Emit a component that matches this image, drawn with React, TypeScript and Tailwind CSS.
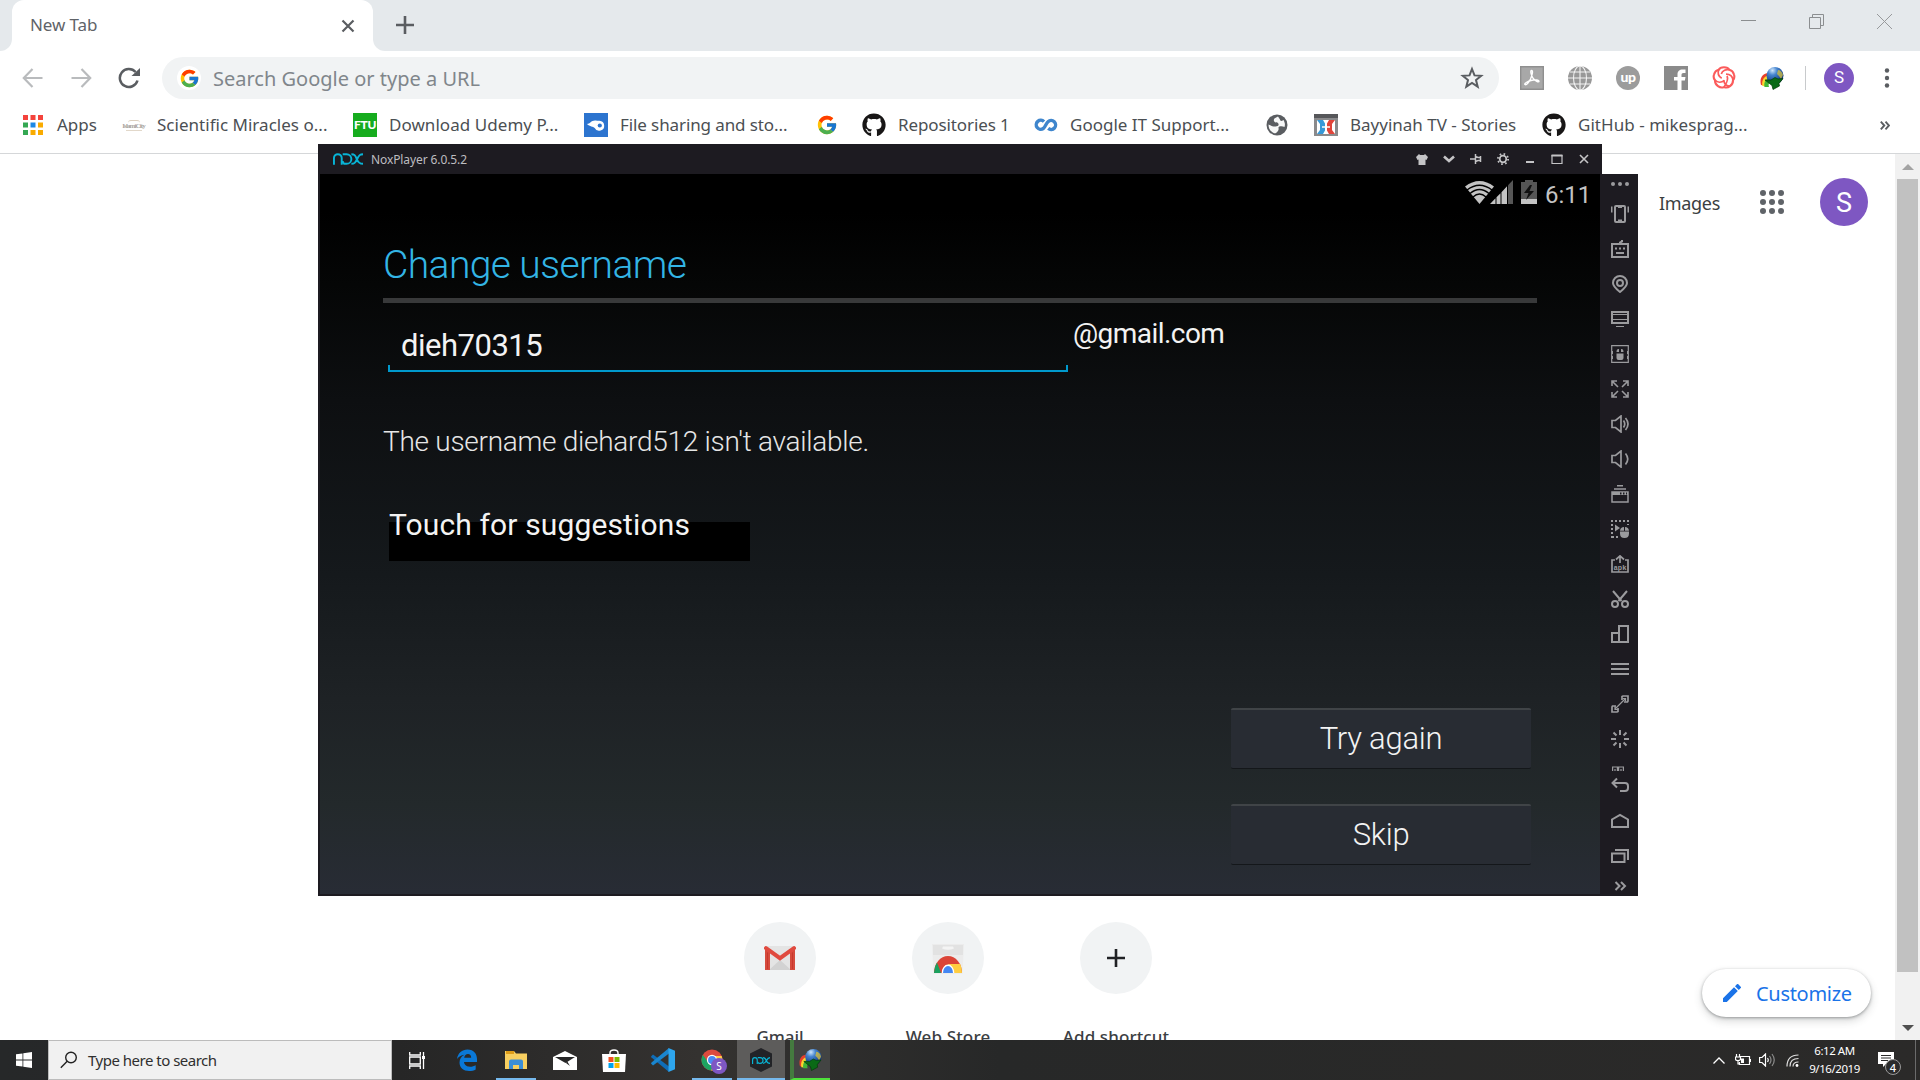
import React from "react";
import type { ReactNode } from "react";
import { FcGoogle } from "react-icons/fc";
import { FaGithub } from "react-icons/fa";

const UI = "font-['Noto_Sans',sans-serif]";

/* ---------- shared drawings ---------- */

function Idm({ className }: { className: string }) {
  return (
    <svg viewBox="0 0 24 24" className={className}>
      <defs>
        <radialGradient id="idmBlue" cx=".35" cy=".2" r=".8">
          <stop offset="0" stopColor="#cfe6fb" />
          <stop offset=".35" stopColor="#4484cf" />
          <stop offset="1" stopColor="#0b2f73" />
        </radialGradient>
      </defs>
      <path d="M1 19C-1 12 3 6 10 7l2 5c-4-1-6 3-5 8z" fill="#e8402a" />
      <path d="M2.500 20C1 14 5 9 10 9.500l2 4c-4-1-5 3-4 7z" fill="#f8d72d" />
      <path d="M4.500 21C3.500 16 6 12 11 12l1 4c-3 0-4 2-3 5z" fill="#43b638" />
      <circle cx="15" cy="9.500" r="8.500" fill="url(#idmBlue)" />
      <path d="M18 4c2 0 4.500 2 5 5l-2 4-2-3-2-2z" fill="#d8c03c" opacity=".75" />
      <path d="M5 14l6 0 4-2.500 3 1.500 5-.5-4 5 .5 2.500-6.500 3.500-1-4z" fill="#0a6a16" stroke="#033a09" strokeWidth=".7" />
    </svg>
  );
}

function Chrome({ className }: { className: string }) {
  return (
    <svg viewBox="0 0 24 24" className={className}>
      <circle cx="12" cy="12" r="11.500" fill="#dd4b3e" />
      <path d="M2 6.300A11.500 11.500 0 0 0 11 23.400L16.500 14 7.500 14z" fill="#1da462" />
      <path d="M11 23.400A11.500 11.500 0 0 0 22.500 7.500L12 7.500 16.500 14z" fill="#ffcd46" />
      <circle cx="12" cy="12" r="5.600" fill="#fff" />
      <circle cx="12" cy="12" r="4.300" fill="#4a8af4" />
    </svg>
  );
}

function NoxLogo({ className }: { className: string }) {
  return (
    <svg viewBox="0 0 31 12" className={className} fill="none" stroke="#08b4d6" strokeWidth="2">
      <path d="M1 12V5a4 4 0 0 1 8 0v7" />
      <path d="M10 1h4a5 5 0 0 1 0 10h-1a3 3 0 0 1-3-3" />
      <path d="M19 1c3 0 4 1 5.500 5S28 11 31 11M31 1c-3 0-4 1-6 5s-3 5-6 5" />
    </svg>
  );
}

/* ---------- browser ---------- */

function TabStrip() {
  return (
    <div className="flex h-[51px] bg-[#e5e9ec]">
      <div className="w-3 bg-white">
        <div className="h-full rounded-br-[12px] bg-[#e5e9ec]" />
      </div>
      <div className="bg-[#e5e9ec]">
        <div className="flex h-full w-[361px] items-center justify-between rounded-t-[12px] bg-white pr-[17px] pl-[18px]">
          <span className="-mt-0.5 text-[17px] leading-6 tracking-[-0.1px] text-[#5f6368]">New Tab</span>
          <svg viewBox="0 0 16 16" className="h-4 w-4" stroke="#5a5d61" strokeWidth="2.200">
            <path d="M2.500 2.500l11 11M13.500 2.500l-11 11" />
          </svg>
        </div>
      </div>
      <div className="flex flex-1 bg-white">
        <div className="flex flex-1 rounded-bl-[12px] bg-[#e5e9ec] pl-[23px]">
          <svg viewBox="0 0 18 18" className="mt-4 h-[18px] w-[18px]" stroke="#5a5d61" strokeWidth="2.600">
            <path d="M9 0v18M0 9h18" />
          </svg>
          <div className="mr-[28px] ml-auto flex gap-[53px] pt-[14px]">
            <svg viewBox="0 0 15 15" className="h-[15px] w-[15px]" stroke="#8b8e90">
              <path d="M0 6.500h15" />
            </svg>
            <svg viewBox="0 0 15 15" className="h-[15px] w-[15px]" stroke="#8b8e90" fill="none">
              <path d="M.5 3.500h11v11H.5zM3.500 3.500v-3h11v11h-3" />
            </svg>
            <svg viewBox="0 0 15 15" className="h-[15px] w-[15px]" stroke="#97999b">
              <path d="M0 0l15 15M15 0L0 15" />
            </svg>
          </div>
        </div>
      </div>
    </div>
  );
}

function Toolbar() {
  return (
    <div className="flex h-[54px] items-center bg-white pl-[22px]">
      <svg viewBox="0 0 22 22" className="h-[22px] w-[22px]" stroke="#b9bbbd" strokeWidth="2.200" fill="none">
        <path d="M20.500 11H2M10.500 2L1.800 11l8.700 9" />
      </svg>
      <svg viewBox="0 0 22 22" className="ml-[26px] h-[22px] w-[22px]" stroke="#b9bbbd" strokeWidth="2.200" fill="none">
        <path d="M1.500 11H20M11.500 2l8.700 9-8.700 9" />
      </svg>
      <svg viewBox="0 0 22 22" className="ml-[26px] h-[22px] w-[22px]" stroke="#5a5d61" strokeWidth="2.500" fill="none">
        <path d="M19.500 13.500A9 9 0 1 1 17.600 5" />
        <path d="M13.500 9H22V1z" fill="#5a5d61" stroke="none" />
      </svg>
      <div className="ml-[22px] flex h-[42px] w-[1337px] items-center rounded-full bg-[#f1f3f4] pr-[15px] pl-[15px]">
        <span className="flex h-6 w-6 items-center justify-center rounded-full bg-white">
          <FcGoogle className="h-[21px] w-[21px]" />
        </span>
        <span className="ml-3 pt-px text-[20px] leading-7 text-[#80868b]">Search Google or type a URL</span>
        <svg viewBox="0 0 24 24" className="ml-auto h-[24px] w-[24px]" fill="none" stroke="#5a5d61" strokeWidth="2">
          <path d="M12 3l2.500 6.400 6.700.4-5.200 4.300 1.700 6.600L12 17l-5.700 3.700L8 14.100 2.800 9.800l6.700-.4z" />
        </svg>
      </div>
      <div className="ml-[21px] flex gap-6">
        <svg viewBox="0 0 24 24" className="h-6 w-6">
          <path d="M0 0h24v24H0z" fill="#a8a8a8" />
          <path d="M.7.7h22.600v22.600H.7z" fill="none" stroke="#8f8f8f" strokeWidth="1.400" />
          <path d="M11.500 4.500c2 0 .5 5-1 8.500-1.500 3-4 6.500-5.500 5.500-1-1 3-3.500 7-4.300 4-.8 7-.2 7 1 0 1.800-4-.2-6-3-1.700-2.400-3-7.700-1.500-7.700z" fill="none" stroke="#fff" strokeWidth="1.400" />
        </svg>
        <svg viewBox="0 0 24 24" className="h-6 w-6">
          <circle cx="12" cy="12" r="12" fill="#989898" />
          <g fill="none" stroke="#f2f2f2" strokeWidth="1.100">
            <path d="M12 0v24M0 12h24M2 6h20M2 18h20" />
            <ellipse cx="12" cy="12" rx="6.500" ry="12" />
          </g>
        </svg>
        <span className="flex h-6 w-6 items-center justify-center rounded-full bg-[#9c9c9c] pb-0.5 font-['Lato',sans-serif] text-[14px] leading-none font-black tracking-[-0.5px] text-white">
          up
        </span>
        <svg viewBox="0 0 24 24" className="h-6 w-6">
          <path d="M0 0h24v24H0z" fill="#8a8a8a" />
          <path d="M13.500 24v-9.500H10V11h3.500V8.500C13.500 5 15.500 3.500 18.500 3.500h3V7H19.500C18 7 17.500 7.700 17.500 9v2h4l-.6 3.500h-3.400V24z" fill="#fff" />
        </svg>
        <svg viewBox="0 0 24 24" className="h-6 w-6" fill="none" stroke="#fb5b5b" strokeWidth="2.100">
          <path d="M12 1.200c3 0 4.500 1 5.300 2.600 2.600.6 4 2.300 4.700 4.700.8 2.500.2 4.300-1 5.700.1 2.700-1 4.600-3 6-2.100 1.600-4 1.700-6 .9-2 .8-3.900.7-6-.9-2-1.400-3.100-3.300-3-6C1.800 12.800 1.200 11 2 8.500c.7-2.400 2.100-4.100 4.700-4.700C7.500 2.200 9 1.200 12 1.200z" />
          <path d="M6.700 3.800c-1.500 4 .5 7 3 8.500M17.300 3.800c-3-.8-7 .4-8 4.200M21 14.200c-.4-3.500-3-6-7-6M18 20.200c-3 0-6.500-2.500-6-6M3 14.200c2.500 2.500 6.500 2.600 9.500.2M15 10c2 4-1 8-3 11" strokeWidth="1.700" />
        </svg>
        <Idm className="h-6 w-6" />
      </div>
      <div className="ml-[21px] h-6 w-px bg-[#c8cacc]" />
      <div className="ml-[18px] flex h-[30px] w-[30px] items-center justify-center rounded-full bg-[#7e57c2] font-['Roboto',sans-serif] text-[17px] text-white">S</div>
      <svg viewBox="0 0 6 20" className="ml-[30px] h-5 w-[6px]" fill="#5a5d61">
        <circle cx="3" cy="2.500" r="2.200" />
        <circle cx="3" cy="10" r="2.200" />
        <circle cx="3" cy="17.500" r="2.200" />
      </svg>
    </div>
  );
}

function Bookmark({ icon, label, className }: { icon: ReactNode; label?: string; className: string }) {
  return (
    <div className={`flex shrink-0 items-center whitespace-nowrap ${className}`}>
      {icon}
      {label && <span className="ml-3 leading-6">{label}</span>}
    </div>
  );
}

const appColors = [
  ["#f4433c", "#f4433c", "#f4433c"],
  ["#34a853", "#1e88e5", "#f9ab00"],
  ["#34a853", "#f9ab00", "#f9ab00"],
];

function BookmarksBar() {
  return (
    <div className="flex h-[49px] items-center border-b border-[#d5d7d9] bg-white pb-2 pl-[23px] text-[17px] text-[#4b4f53]">
      <Bookmark
        className="w-[99px] [&>span]:ml-[14px]"
        label="Apps"
        icon={
          <svg viewBox="0 0 20 20" className="h-5 w-5">
            {appColors.map((row, y) => row.map((c, x) => <rect key={`${x}${y}`} x={x * 7.5} y={y * 7.5} width="5" height="5" fill={c} />))}
          </svg>
        }
      />
      <Bookmark
        className="w-[231px] tracking-[0.02px]"
        label="Scientific Miracles o..."
        icon={
          <span className="flex h-6 w-[23px] flex-col items-center justify-center font-['Liberation_Serif',serif] text-[7px] leading-none font-bold tracking-[-0.9px] text-[#a9a4a0]">
            <span className="h-[3px] w-3 rounded-t-full border-t border-[#dccfbe]" />
            IslamiCity
            <span className="h-px w-4 bg-[#e2d8ca]" />
          </span>
        }
      />
      <Bookmark
        className="w-[231px] tracking-[0.05px]"
        label="Download Udemy P..."
        icon={
          <span className="flex h-6 w-6 items-center justify-center bg-[#16ac1e] font-['Lato',sans-serif] text-[12px] font-black tracking-[-0.3px] text-white">FTU</span>
        }
      />
      <Bookmark
        className="w-[232px] tracking-[-0.1px]"
        label="File sharing and sto..."
        icon={
          <svg viewBox="0 0 24 24" className="h-6 w-6">
            <path d="M0 0h24v24H0z" fill="#2c74cf" />
            <path d="M3 11c3 0 4-3.500 8-3.500 2 0 2.500.5 4.500.3a5 5 0 1 1-4.800 7.200C9 13 6 14 3 11z" fill="#fff" />
            <circle cx="15.800" cy="12.500" r="2.100" fill="#2c74cf" />
          </svg>
        }
      />
      <Bookmark className="w-[46px]" icon={<FcGoogle className="h-[22px] w-[22px]" />} />
      <Bookmark className="w-[172px] tracking-[-0.1px]" label="Repositories 1" icon={<FaGithub className="h-6 w-6 text-[#181616]" />} />
      <Bookmark
        className="w-[232px]"
        label="Google IT Support..."
        icon={
          <svg viewBox="0 0 24 24" className="h-6 w-6" fill="none" stroke="#3f86cd" strokeWidth="3.400">
            <path d="M10 8.700A4.500 4.500 0 1 0 9.300 15.500C11.500 13.500 12 10.500 14 8.700a4.500 4.500 0 1 1 .2 6.700" />
          </svg>
        }
      />
      <Bookmark
        className="w-[48px]"
        icon={
          <svg viewBox="0 0 22 22" className="h-[22px] w-[22px]">
            <circle cx="11" cy="11" r="10.500" fill="#5a5d61" />
            <path d="M12 2.500c-2 1-5 2-4 4.500s4 .5 4.500 3-1 2-3 2.500-5-1-7-2c0 3 1 5.500 3.500 7.500 2 1.500 3 1.500 4 1 2-2 3-3 2.500-5s4-2 6-1c1-3 0-5-1-7-2 1-3 1.500-3.500-.5z" fill="#fff" opacity=".95" />
          </svg>
        }
      />
      <Bookmark
        className="w-[228px]"
        label="Bayyinah TV - Stories"
        icon={
          <svg viewBox="0 0 24 24" className="h-6 w-6">
            <path d="M0 1h24v22H0z" fill="#8a8a8c" />
            <path d="M0 1h24v4H0z" fill="#56575a" />
            <path d="M3 7h18v14H3z" fill="#fff" />
            <path d="M3 7h6l2 3.500v7L9 21H3l3-4v-6z" fill="#3799d8" />
            <path d="M21 7h-6l-2 3.500v7l2 3.500h6l-3-4v-6z" fill="#e0443a" />
            <path d="M8 14h8" stroke="#fff" strokeWidth="1.500" />
          </svg>
        }
      />
      <Bookmark className="w-[338px] tracking-[0.04px]" label="GitHub - mikesprag..." icon={<FaGithub className="h-6 w-6 text-[#181616]" />} />
      <svg viewBox="0 0 10 9" className="h-[9px] w-[10px]" fill="none" stroke="#5a5d61" strokeWidth="1.900">
        <path d="M.8.7l3.500 3.800L.8 8.300M5.500.7L9 4.500 5.500 8.300" />
      </svg>
    </div>
  );
}

function Shortcut({ label, className, children }: { label: string; className: string; children: ReactNode }) {
  return (
    <div className="flex w-[168px] flex-col items-center">
      <div className="flex h-[72px] w-[72px] shrink-0 items-center justify-center rounded-full bg-[#f1f3f4]">{children}</div>
      <span className={`mt-[31px] shrink-0 text-[17px] leading-6 font-medium whitespace-nowrap text-[#3c4043] ${className}`}>{label}</span>
    </div>
  );
}

function NewTabPage() {
  return (
    <div className="flex h-[886px] bg-white">
      <div className="flex w-[1895px] flex-col overflow-hidden">
        <div className="mt-[24px] mr-[27px] flex h-[48px] items-center justify-end">
          <span className="pt-px text-[18px] leading-6 tracking-[-0.3px] text-[#3b3e41]">Images</span>
          <svg viewBox="0 0 24 24" className="ml-[40px] h-6 w-6" fill="#5f6368">
            {[3, 12, 21].map((y) => [3, 12, 21].map((x) => <circle key={`${x}-${y}`} cx={x} cy={y} r="3" />))}
          </svg>
          <div className="ml-[36px] flex h-12 w-12 items-center justify-center rounded-full bg-[#7e57c2] pt-[3px] font-['Roboto',sans-serif] text-[27px] leading-none text-white">S</div>
        </div>
        <div className="mt-[696px] ml-[696px] flex h-[118px] shrink-0">
          <Shortcut label="Gmail" className="tracking-[-0.1px]">
            <svg viewBox="0 0 32 24" className="h-6 w-8">
              <path d="M2 0h28v24H2z" fill="#e4e4e4" />
              <path d="M5 24l11-10 11 10z" fill="#d2d2d2" />
              <path d="M2 2v22h3V7zM30 2v22h-3V7z" fill="#c9372c" stroke="#d54b3d" strokeWidth="2" strokeLinejoin="round" />
              <path d="M2 2.200L16 12.200 30 2.200" fill="none" stroke="#e04a3f" strokeWidth="4" strokeLinecap="round" />
            </svg>
          </Shortcut>
          <Shortcut label="Web Store" className="tracking-[0.15px]">
            <svg viewBox="0 0 32 30" className="mt-px h-[30px] w-8">
              <path d="M0 0h32L30.500 30h-29z" fill="#ececec" />
              <path d="M1 1h30v10H1z" fill="#e2e2e2" />
              <path d="M10 4.500q6 2.500 12 0l-1-2H11z" fill="#f4f4f4" />
              <path d="M2 29a14 17 0 0 1 28 0z" fill="#db4437" />
              <path d="M5 18.500A14 17 0 0 0 2 29h7z" fill="#1aa15f" />
              <path d="M16 20h12.200A14 17 0 0 1 30 29h-9z" fill="#ffcd40" />
              <path d="M9.700 29a6.300 8.500 0 0 1 12.600 0z" fill="#fff" />
              <path d="M11 29a5 7 0 0 1 10 0z" fill="#4587f3" />
            </svg>
          </Shortcut>
          <Shortcut label="Add shortcut" className="tracking-[0.1px]">
            <svg viewBox="0 0 18 18" className="h-[18px] w-[18px]" stroke="#202124" strokeWidth="2.600">
              <path d="M9 0v18M0 9h18" />
            </svg>
          </Shortcut>
          <button className="mt-[47px] ml-auto mr-6 flex h-12 w-[169px] items-center rounded-full bg-white pl-[21px] text-[20px] leading-6 tracking-[-0.3px] text-[#1a73e8] shadow-[0_1px_3px_rgba(60,64,67,.45),0_4px_9px_rgba(60,64,67,.2)]">
            <svg viewBox="0 0 18 18" className="mr-[15px] h-[18px] w-[18px]" fill="#1a73e8">
              <path d="M0 14.200V18h3.800L14.800 7 11 3.200zM17.700 4.100a1 1 0 0 0 0-1.400L15.300.3a1 1 0 0 0-1.400 0L12 2.200 15.800 6z" />
            </svg>
            <span className="pt-[2px]">Customize</span>
          </button>
        </div>
      </div>
      <div className="flex w-[25px] flex-col items-center bg-[#f1f1f1]">
        <svg viewBox="0 0 12 6" className="mt-2.5 h-1.5 w-3" fill="#a3a3a3">
          <path d="M0 6l6-6 6 6z" />
        </svg>
        <div className="mt-[9px] h-[793px] w-[21px] bg-[#c1c1c1]" />
        <svg viewBox="0 0 12 6" className="mt-[53px] h-1.5 w-3" fill="#505050">
          <path d="M0 0l6 6 6-6z" />
        </svg>
      </div>
    </div>
  );
}

/* ---------- emulator window ---------- */

function TitleBar() {
  return (
    <div className="flex h-[30px] w-[1284px] items-center bg-[#1d1b21] pl-[15px] text-[12px] text-[#bdbdc0]">
      <NoxLogo className="h-3 w-[30px]" />
      <span className="ml-2 pt-[2px] leading-4 tracking-[-0.1px]">NoxPlayer 6.0.5.2</span>
      <div className="mr-[12px] ml-auto flex items-center gap-[15px] text-[#c4c4c6]">
        <svg viewBox="0 0 12 11" className="h-[11px] w-3" fill="currentColor">
          <path d="M3 0l1 1h4l1-1 3 3-1.500 3L9.500 5.500V11h-7V5.500L1.500 6 0 3z" />
        </svg>
        <svg viewBox="0 0 12 12" className="h-3 w-3" fill="none" stroke="currentColor" strokeWidth="2.600">
          <path d="M1 3.500l5 4.500 5-4.500" />
        </svg>
        <svg viewBox="0 0 12 12" className="h-3 w-3" fill="none" stroke="currentColor" strokeWidth="1.500">
          <path d="M0 6h5M5.500 1v10M5.500 3.500L8 4.500h3M5.500 8.500L8 7.500h3M10.500 3v6" />
        </svg>
        <svg viewBox="0 0 12 12" className="h-3 w-3" fill="none" stroke="currentColor">
          <circle cx="6" cy="6" r="3.300" strokeWidth="1.700" />
          <circle cx="6" cy="6" r="5.100" strokeWidth="1.800" strokeDasharray="1.600 2.405" />
        </svg>
        <svg viewBox="0 0 12 12" className="h-3 w-3" stroke="currentColor" strokeWidth="2">
          <path d="M2 9h8" />
        </svg>
        <svg viewBox="0 0 12 12" className="h-3 w-3" fill="none" stroke="currentColor">
          <path d="M1 2.500h10v8H1z" strokeWidth="1.200" />
          <path d="M.5 2.500h11" strokeWidth="2" />
        </svg>
        <svg viewBox="0 0 12 12" className="h-3 w-3" stroke="currentColor" strokeWidth="1.600">
          <path d="M2 2l8 8M10 2l-8 8" />
        </svg>
      </div>
    </div>
  );
}

function StatusBar() {
  return (
    <div className="flex h-[38px] shrink-0 items-start justify-end bg-black pr-[9px] text-[#c3c3c3]">
      <svg viewBox="0 0 29 23" className="mt-[7px] h-[23px] w-[29px]">
        <path d="M14.500 23L0 5.500Q14.500-5.500 29 5.500z" fill="#c3c3c3" />
        <g fill="none" stroke="#000" strokeWidth="1.400">
          <path d="M2 9Q14.500-.5 27 9M5 12.500Q14.500 4.500 24 12.500M8 16Q14.500 10 21 16" />
        </g>
      </svg>
      <svg viewBox="0 0 23 24" className="mt-[6px] -ml-[4px] h-6 w-[23px]">
        <path d="M18 5.200L23 0v24h-5z" fill="#565656" />
        <path d="M0 24l5.500-5.700V24zM6.500 24v-6.800l4-4V24zM11.500 24V12.200l5.500-6V24z" fill="#c3c3c3" />
      </svg>
      <svg viewBox="0 0 16 24" className="mt-[6px] ml-[8px] h-6 w-4">
        <path d="M0 2h4V0h8v2h4v22H0z" fill="#565656" />
        <path d="M0 19h16v5H0z" fill="#c3c3c3" />
        <path d="M9 5l-6 8h4.500L5 20l8-9H8.500L11 5z" fill="#111" />
      </svg>
      <span className="mt-[5px] ml-[8px] w-[46px] font-['Roboto',sans-serif] text-[24px] leading-8 whitespace-nowrap">6:11</span>
    </div>
  );
}

function AndroidButton({ children }: { children: ReactNode }) {
  return (
    <button className="h-[61px] w-[300px] rounded-[2px] border-t-2 border-b border-t-[#404447] border-b-[#14171a] bg-[#282c33] text-[31px] leading-[56px] font-light tracking-[-0.25px] text-[#f3f3f3]">
      {children}
    </button>
  );
}

function Screen() {
  return (
    <div className="flex h-[720px] w-[1280px] flex-col bg-[linear-gradient(180deg,#000_0px,#000_38px,#050606_110px,#0d0f11_226px,#15191c_400px,#1e2225_525px,#23292b_630px,#282c35_720px)] font-['Roboto',sans-serif] text-[#f3f3f3]">
      <StatusBar />
      <div className="flex flex-col pr-[63px] pl-[63px]">
        <h1 className="mt-[27px] text-[39px] leading-[52px] font-light tracking-[-0.58px] text-[#33b5e5]">Change username</h1>
        <div className="mt-[7px] h-[5px] bg-[#38393a]" />
        <div className="flex">
          <div className="ml-[5px] w-[680px] pt-[23px]">
            <div className="pl-[13px] text-[31px] leading-[39px] tracking-[-0.5px]">dieh70315</div>
            <div className="h-[7px] border-x-2 border-b-2 border-[#0099cc]" />
          </div>
          <span className="mt-[11px] ml-[5px] text-[28px] leading-10 tracking-[-0.55px]">@gmail.com</span>
        </div>
        <p className="mt-[50px] text-[28px] leading-10 font-light tracking-[-0.28px] text-[#e6e6e6]">The username diehard512 isn't available.</p>
        <div className="mt-[60px] ml-[6px] h-[39px] w-[361px] bg-black">
          <div className="-mt-[17px] text-[30px] leading-10 tracking-[0.13px] whitespace-nowrap">Touch for suggestions</div>
        </div>
        <div className="mt-[147px] mr-[6px] flex flex-col gap-[35px] self-end">
          <AndroidButton>Try again</AndroidButton>
          <AndroidButton>Skip</AndroidButton>
        </div>
      </div>
    </div>
  );
}

const sideIcons: ReactNode[] = [
  <>
    <rect x="4" y="1" width="10" height="16" rx="1" />
    <path d="M7 2h4M7 15.500h4M.5 1.500v6M17.500 1.500v6" />
  </>,
  <>
    <path d="M1 4h16v13H1zM9 4V2.500l2-1V0" />
    <path d="M4 8.500h2M8 8.500h2M12 8.500h2M5 13h8" />
  </>,
  <>
    <path d="M9 17C4 13 2 11 2 8a7 7 0 0 1 14 0c0 3-2 5-7 9z" />
    <circle cx="9" cy="8" r="3" />
  </>,
  <>
    <path d="M1 2h16v11H1z" />
    <path d="M2 4.500h14M2 9.500h14M5 16.500h8" strokeWidth="1" />
  </>,
  <>
    <path d="M.7.7h16.600v16.600H.7z" strokeWidth="1.200" />
    <path d="M1.500 6v3M1.500 11v3M16.500 6v3M16.500 11v3" strokeWidth="1" />
    <path d="M5.500 8.500h7V13q0 2-2 2h-3q-2 0-2-2zM5.500 7q0-3 2-3h3q2 0 2 3z" fill="currentColor" stroke="none" />
    <path d="M9 4v3" stroke="#1d1b21" />
  </>,
  <path d="M1 6V1h5M12 1h5v5M17 12v5h-5M6 17H1v-5M1.500 1.500L7 7M16.500 1.500L11 7M16.500 16.500L11 11M1.500 16.500L7 11" strokeWidth="1.600" />,
  <path d="M1 5.500h3.500L10 1v16l-5.500-4.500H1zM12.500 5.500q2.500 3.500 0 7M14.500 3q5 6 0 12" strokeWidth="1.700" />,
  <path d="M1 5.500h3.500L10 1v16l-5.500-4.500H1zM14.500 3.500q4.500 5.500 0 11" strokeWidth="1.700" />,
  <>
    <path d="M6 .8h6M3 4h12M1 7h16v10H1z" strokeWidth="1.500" />
    <path d="M1 7h16v3H1z" fill="currentColor" stroke="none" />
    <path d="M9 8.500h1.500M12 8.500h1.500M15 8.500h1" stroke="#1d1b21" />
  </>,
  <>
    <path d="M0 1h18M1 0v18M1 17h7M17 0v5" strokeDasharray="2 2" />
    <path d="M4 4.500l5 3.500-5 3.500z" fill="currentColor" stroke="none" />
    <path d="M9 11.500h9v2q0 4.500-4.500 4.500T9 13.500zM9 10.700q.5-3.700 4-3.700V10.700zM14 7q3.500 0 4 3.700h-4zM14 7l2-2" fill="currentColor" stroke="none" />
  </>,
  <>
    <path d="M4 5H1v12h16V5h-3M9 8V1M5 4.500L9 .9l4 3.600" strokeWidth="1.700" />
    <text x="9" y="14.500" textAnchor="middle" fontSize="8" fontFamily="Liberation Mono" fontWeight="bold" fill="currentColor" stroke="none" textLength="13" lengthAdjust="spacingAndGlyphs">
      apk
    </text>
  </>,
  <>
    <path d="M2 1l8.500 10M16 1L7.500 11" />
    <circle cx="4" cy="14" r="3" />
    <circle cx="14" cy="14" r="3" />
  </>,
  <path d="M8 17V1h9v16H1V8h7" />,
  <path d="M0 4h18M0 9h18M0 14h18" />,
  <>
    <path d="M11 5V1.500L12 1h5v5l-.5 1H13M7 13v3.500L6 17H1v-5l.5-1H5" strokeWidth="1.700" />
    <path d="M4 14L14.500 3.500M11.500 3.500h3v3M4 11v3.500h3.500" strokeWidth="1.200" />
  </>,
  <path d="M9 0v5M9 13v5M0 9h5M13 9h5M2.500 2.500l3 3M12.500 12.500l3 3M2.500 15.500l3-3M12.500 5.500l3-3" />,
];

function SideIcon({ children, className = "" }: { children: ReactNode; className?: string }) {
  return (
    <svg viewBox="0 0 18 18" className={`h-[18px] w-[18px] shrink-0 ${className}`} fill="none" stroke="currentColor" strokeWidth="2">
      {children}
    </svg>
  );
}

function Sidebar() {
  return (
    <div className="flex w-[38px] flex-col items-center bg-[#1d1b21] pt-2 pl-[2px] text-[#9b9b9e]">
      <svg viewBox="0 0 18 4" className="mb-[19px] h-1 w-[18px] shrink-0" fill="currentColor">
        <circle cx="2" cy="2" r="2" />
        <circle cx="9" cy="2" r="2" />
        <circle cx="16" cy="2" r="2" />
      </svg>
      <div className="flex flex-col gap-[17px]">
        {sideIcons.map((icon, i) => (
          <SideIcon key={i}>{icon}</SideIcon>
        ))}
      </div>
      <svg viewBox="0 0 12 5" className="mt-[18px] mr-1 h-[5px] w-3 shrink-0" fill="none" stroke="currentColor" strokeWidth="1.200">
        <path d="M.6 5V1h4.800v4M6.600 5V1h4.800v4M3 3v2M9 3v2" />
      </svg>
      <SideIcon className="mt-[6px]">
        <path d="M1 6h13q3 0 3 3v2q0 3-3 3H9M6 1.500L1.500 6 6 10.500" />
      </SideIcon>
      <SideIcon className="mt-[17px]">
        <path d="M1 15V7.500L9 3l8 4.500V15z" />
      </SideIcon>
      <SideIcon className="mt-[17px]">
        <path d="M1 6.500h12.500V15H1zM4 3h13v10" />
      </SideIcon>
      <SideIcon className="mt-[12px]">
        <path d="M4.500 5l4 4-4 4M10 5l4 4-4 4" />
      </SideIcon>
    </div>
  );
}

function EmulatorWindow() {
  return (
    <div className="absolute top-[144px] left-[318px]">
      <TitleBar />
      <div className="flex h-[722px] w-[1320px] bg-[#1d1b21] pl-[2px]">
        <Screen />
        <Sidebar />
      </div>
    </div>
  );
}

/* ---------- taskbar ---------- */

function Task({ children, className = "w-[49px]" }: { children: ReactNode; className?: string }) {
  return <div className={`flex h-10 shrink-0 items-center justify-center ${className}`}>{children}</div>;
}

function Taskbar() {
  return (
    <div className="flex h-10 items-center bg-[linear-gradient(90deg,#262829_0px,#262626_400px,#343230_700px,#272828_1000px,#2b2a29_1920px)] text-white">
      <div className="flex w-12 justify-center">
        <svg viewBox="0 0 16 16" className="h-4 w-4" fill="#fff">
          <path d="M0 2.300l6.500-.9v6.200H0zM7.300 1.300L16 0v7.600H7.300zM0 8.400h6.500v6.200L0 13.700zM7.300 8.400H16V16l-8.700-1.300z" />
        </svg>
      </div>
      <div className="flex h-10 w-[344px] items-center border border-[#bcbcbc] bg-[#f1f1f1] pl-[11px] text-[15px] text-[#2f2f2f]">
        <svg viewBox="0 0 18 18" className="mr-[10px] h-[18px] w-[18px]" fill="none" stroke="#222" strokeWidth="1.400">
          <circle cx="11" cy="6.500" r="5.300" />
          <path d="M7.200 10.300L.8 16.800" />
        </svg>
        <span className="leading-5 tracking-[-0.5px]">Type here to search</span>
      </div>
      <Task className="w-[50px]">
        <svg viewBox="0 0 17 17" className="h-[17px] w-[17px]" fill="none" stroke="#fff" strokeWidth="1.300">
          <path d="M.7 0v3h10.600V0M.7 5h10.600v7H.7zM.7 17v-3h10.600v3M14.500 0v17" />
          <path d="M13 4h3v3h-3z" fill="#fff" stroke="none" />
        </svg>
      </Task>
      <Task>
        <svg viewBox="0 0 22 22" className="h-[22px] w-[22px]">
          <path d="M1 10C2 4 6 .5 11.500.5 18 .5 21 5 21 10v3H8c.2 3 3 4.700 6 4.700 2.300 0 4.300-.6 5.700-1.500v4.300c-1.700 1-4 1.500-6.500 1.500C7.500 22 3.500 18.500 3.500 13.500 3.500 10 5.500 7 8.500 5.800 5 6 2.500 8 1 10zm7.200-1.200h7C15.200 6.500 14 5 12 5S8.500 6.500 8.200 8.800z" fill="#0a78d7" />
        </svg>
      </Task>
      <Task className="relative w-[49px]">
        <svg viewBox="0 0 22 18" className="h-[18px] w-[22px]">
          <path d="M0 0h9l2 2.500h11V18H0z" fill="#f7cf60" />
          <path d="M1 0h8v3H1z" fill="#dd9c18" />
          <path d="M4 10.500q0-2 2-2h10q2 0 2 2V18h-4v-4H8v4H4z" fill="#3b8ed6" />
        </svg>
        <span className="absolute bottom-0 h-[2px] w-10 bg-[#76b9ed]" />
      </Task>
      <Task>
        <svg viewBox="0 0 24 19" className="h-[19px] w-6" fill="#fff">
          <path d="M0 6l12-6 12 6v13H0z" />
          <path d="M2 6h20L12.500 12z" fill="#262626" />
          <path d="M14 10l3 5-4-3z" fill="#262626" />
        </svg>
      </Task>
      <Task>
        <svg viewBox="0 0 24 23" className="h-[23px] w-6">
          <path d="M8 6V4q0-3 4-3t4 3v2" fill="none" stroke="#fff" strokeWidth="1.400" />
          <path d="M0 5h24l-1 18H1z" fill="#fff" />
          <path d="M6.500 8h5v5h-5z" fill="#f25022" />
          <path d="M12.500 8h5v5h-5z" fill="#7fba00" />
          <path d="M6.500 14h5v5h-5z" fill="#00a4ef" />
          <path d="M12.500 14h5v5h-5z" fill="#ffb900" />
        </svg>
      </Task>
      <Task>
        <svg viewBox="0 0 24 24" className="h-6 w-6">
          <path d="M0 8.500L2 6.500l16 12V24L.5 9.500z" fill="#0f6db8" />
          <path d="M0 15.500L2 17.500l16-12V0L.5 14.500z" fill="#1a86cf" />
          <path d="M17.500 0L24 2.800v18.400L17.500 24z" fill="#2ea6ee" />
        </svg>
      </Task>
      <Task className="relative w-[49px]">
        <Chrome className="h-[22px] w-[22px]" />
        <span className="absolute top-[18px] left-[24px] flex h-4 w-4 items-center justify-center rounded-full bg-[#7e57c2] text-[10px] leading-none">S</span>
        <span className="absolute bottom-0 h-[2px] w-10 bg-[#76b9ed]" />
      </Task>
      <div className="ml-px flex h-10 w-12 items-center justify-center border-b-2 border-[#76b9ed] bg-[#5d5c5b]">
        <div className="relative mt-0.5 flex h-6 w-[22px] items-center justify-center">
          <svg viewBox="0 0 22 24" className="absolute h-6 w-[22px]">
            <path d="M11 0l11 5.500v13L11 24 0 18.500v-13z" fill="#222327" />
          </svg>
          <NoxLogo className="relative h-[7px] w-[18px]" />
        </div>
      </div>
      <div className="ml-[5px] flex h-10 w-10 items-center justify-center border-b-2 border-l-4 border-b-[#4fe33b] border-l-[#447a3f] bg-[#434443] pr-1">
        <Idm className="h-[23px] w-[23px]" />
      </div>
      <div className="ml-auto flex h-10 items-center">
        <svg viewBox="0 0 12 7" className="h-[7px] w-3" fill="none" stroke="#fff" strokeWidth="1.300">
          <path d="M.5 6.500L6 1l5.500 5.500" />
        </svg>
        <svg viewBox="0 0 16 12" className="ml-[10px] h-3 w-4" fill="none" stroke="#fff" strokeWidth="1.200">
          <path d="M5 2.500h9.500v8H4.500V8M15.500 5v3M1.500 0v2.500M4.500 0v2.500M.5 3h5v2q0 1.500-2.500 1.500T.5 5zM3 6.500V10h1.500" />
          <path d="M6 4.500h3V9H6z" fill="#fff" stroke="none" />
        </svg>
        <svg viewBox="0 0 17 14" className="ml-2 h-[14px] w-[17px]" fill="none" stroke="#fff" strokeWidth="1.200">
          <path d="M.6 4.500H3L6.500 1v12L3 9.500H.6zM8.500 5q1.500 2 0 4" />
          <path d="M10.500 3q3 4 0 8M13 1q4.500 6 0 12" stroke="#8b8b8b" />
        </svg>
        <svg viewBox="0 0 13 13" className="ml-[10px] h-[13px] w-[13px]" fill="none" stroke="#fff" strokeWidth="1.200">
          <path d="M1 12.500Q1 1 12.500 1M4 12.500Q4 4.500 12.500 4.500M7 12.500Q7 8 12.500 8" opacity=".85" />
          <circle cx="11" cy="11.500" r="1.400" fill="#fff" stroke="none" />
        </svg>
        <div className="ml-[9px] flex w-[53px] flex-col items-center text-[11.500px] leading-[18px] tracking-[-0.45px] whitespace-nowrap">
          <span>6:12 AM</span>
          <span>9/16/2019</span>
        </div>
        <div className="relative ml-[17px] h-10 w-[26px]">
          <svg viewBox="0 0 16 15" className="mt-[12px] h-[15px] w-4">
            <path d="M0 0h16v12H8l-3 3v-3H0z" fill="#fff" />
            <path d="M3 3.500h10M3 6h10M3 8.500h7" stroke="#2a2a2a" />
          </svg>
          <span className="absolute top-[19px] left-[7px] flex h-4 w-4 items-center justify-center rounded-full border border-[#9a9a9a] bg-[#2b2b2b] text-[11px] leading-none font-medium">4</span>
        </div>
        <div className="ml-[11px] h-10 w-[5px] border-l border-[#6b6b6b]" />
      </div>
    </div>
  );
}

export default function App() {
  return (
    <div className={`relative h-[1080px] w-[1920px] overflow-hidden bg-white ${UI}`}>
      <TabStrip />
      <Toolbar />
      <BookmarksBar />
      <NewTabPage />
      <Taskbar />
      <EmulatorWindow />
    </div>
  );
}
